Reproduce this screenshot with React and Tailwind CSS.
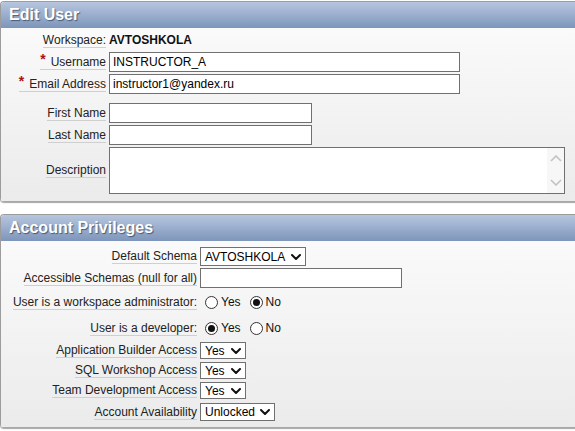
import React from 'react';

// Edit user form: two collapsible-style regions with a gradient header
const FONT = "font-['Liberation_Sans',Arial,sans-serif]";

function Region({ title, children, className = '' }) {
    return (
        <div className={`w-[600px] border-t border-l border-[#9c9c9c] rounded-tl-[4px] rounded-bl-[4px] shadow-[0_1px_1px_rgba(0,0,0,0.35)] overflow-hidden ${className}`}>
            <div className="h-[26px] bg-linear-to-b from-[#b7c6df] to-[#7e96bb] flex items-center pl-[8px]">
                <span className="text-white font-bold text-[16px] leading-none [text-shadow:1px_1px_1px_rgba(30,40,60,0.6)]">{title}</span>
            </div>
            <div className="bg-linear-to-b from-[#fafafa] to-[#ebebeb] border-b border-[#a8a8a8]">
                {children}
            </div>
        </div>
    );
}

function Label({ text, required }) {
    return (
        <span className="inline-block border-b border-[#cfcfcf] leading-[14px] text-[12px] text-[#222] whitespace-nowrap">
            {required && <span className="text-[#a11] font-bold text-[14px] relative -top-[2px] mr-[5px]">*</span>}
            {text}
        </span>
    );
}

function Row({ label, labelWidth, required, className = '', children }) {
    return (
        <div className={`flex items-center ${className}`}>
            <div className="flex justify-end shrink-0" style={{ width: labelWidth }}>
                <Label text={label} required={required} />
            </div>
            <div className="ml-[3px] flex items-center">{children}</div>
        </div>
    );
}

function TextBox({ value = '', width }) {
    return (
        <div className="h-[20px] border border-[#707070] bg-white text-[12px] leading-[18px] px-[3px] text-black" style={{ width }}>
            {value}
        </div>
    );
}

function Chevron() {
    return (
        <svg width="10" height="6" viewBox="0 0 10 6">
            <polyline points="1,1 5,5 9,1" fill="none" stroke="#111" strokeWidth="2" strokeLinecap="round" strokeLinejoin="round" />
        </svg>
    );
}

function Select({ value, width, height = 17 }) {
    return (
        <div className="border border-[#707070] bg-white flex items-center justify-between pl-[4px] pr-[4px] text-[12px] text-black" style={{ width, height }}>
            <span className="leading-none">{value}</span>
            <Chevron />
        </div>
    );
}

function Radio({ checked, label }) {
    return (
        <label className="flex items-center text-[12px] text-[#111]">
            <span className="w-[13px] h-[13px] rounded-full border border-[#333] bg-white flex items-center justify-center ml-[5px] mr-[3px]">
                {checked && <span className="w-[7px] h-[7px] rounded-full bg-[#111]" />}
            </span>
            {label}
        </label>
    );
}

export default function App() {
    return (
        <div className={`w-[575px] h-[431px] overflow-hidden bg-white pt-px ${FONT}`}>
            <Region title="Edit User">
                <div className="pt-[2px] pb-[7px] flex flex-col gap-y-[2px]">
                    <div className="flex items-center h-[20px]">
                        <div className="w-[105px] flex justify-end shrink-0">
                            <Label text="Workspace:" />
                        </div>
                        <span className="ml-[3px] text-[12px] font-bold text-[#111]">AVTOSHKOLA</span>
                    </div>
                    <Row label="Username" labelWidth={105} required>
                        <TextBox value="INSTRUCTOR_A" width={351} />
                    </Row>
                    <Row label="Email Address" labelWidth={105} required>
                        <TextBox value="instructor1@yandex.ru" width={351} />
                    </Row>
                    <Row label="First Name" labelWidth={105} className="mt-[7px]">
                        <TextBox width={203} />
                    </Row>
                    <Row label="Last Name" labelWidth={105}>
                        <TextBox width={203} />
                    </Row>
                    <Row label="Description" labelWidth={105}>
                        <div className="w-[456px] h-[47px] border border-[#707070] bg-white flex justify-end">
                            <div className="w-[17px] h-full bg-[#f7f7f7] flex flex-col items-center justify-between py-[7px]">
                                <svg width="12" height="7" viewBox="0 0 12 7">
                                    <polyline points="1,6 6,1 11,6" fill="none" stroke="#c2c2c2" strokeWidth="1.6" />
                                </svg>
                                <svg width="12" height="7" viewBox="0 0 12 7">
                                    <polyline points="1,1 6,6 11,1" fill="none" stroke="#c2c2c2" strokeWidth="1.6" />
                                </svg>
                            </div>
                        </div>
                    </Row>
                </div>
            </Region>

            <Region title="Account Privileges" className="mt-[12px]">
                <div className="pt-[6px] pb-[6px] flex flex-col">
                    <Row label="Default Schema" labelWidth={196}>
                        <Select value="AVTOSHKOLA" width={106} height={19} />
                    </Row>
                    <Row label="Accessible Schemas (null for all)" labelWidth={196} className="mt-[2px]">
                        <TextBox width={202} />
                    </Row>
                    <Row label="User is a workspace administrator:" labelWidth={196} className="h-[24px] mt-[2px]">
                        <Radio label="Yes" />
                        <span className="w-[4px]" />
                        <Radio label="No" checked />
                    </Row>
                    <Row label="User is a developer:" labelWidth={196} className="h-[24px] mt-[2px]">
                        <Radio label="Yes" checked />
                        <span className="w-[4px]" />
                        <Radio label="No" />
                    </Row>
                    <Row label="Application Builder Access" labelWidth={196} className="mt-[2px]">
                        <Select value="Yes" width={46} />
                    </Row>
                    <Row label="SQL Workshop Access" labelWidth={196} className="mt-[3px]">
                        <Select value="Yes" width={46} />
                    </Row>
                    <Row label="Team Development Access" labelWidth={196} className="mt-[3px]">
                        <Select value="Yes" width={46} />
                    </Row>
                    <Row label="Account Availability" labelWidth={196} className="mt-[4px]">
                        <Select value="Unlocked" width={75} height={18} />
                    </Row>
                </div>
            </Region>
        </div>
    );
}
